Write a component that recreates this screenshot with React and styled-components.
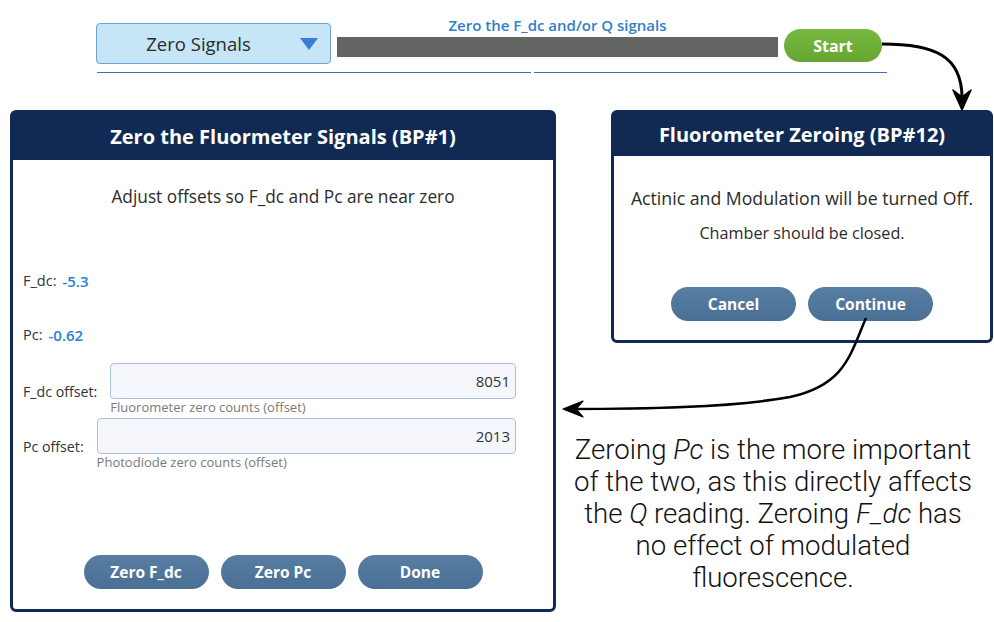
import styled, { createGlobalStyle } from "styled-components";

const GlobalStyle = createGlobalStyle`
  html, body {
    margin: 0;
    padding: 0;
    background: #ffffff;
  }
  body {
    font-family: "Open Sans", "Noto Sans", sans-serif;
    color: #333333;
  }
`;

const Page = styled.div`
  position: relative;
  width: 994px;
  height: 622px;
  overflow: hidden;
`;

const TopBar = styled.div`
  display: flex;
  align-items: flex-start;
  padding: 16px 0 0 96px;
`;

const Dropdown = styled.div`
  box-sizing: border-box;
  margin-top: 7px;
  width: 235px;
  height: 41px;
  background: #c6e6f8;
  border: 1px solid #6aa3d8;
  border-radius: 4px;
  display: flex;
  align-items: center;
  position: relative;
  font-size: 18.5px;
  color: #2b2b2b;
`;

const DropdownText = styled.span`
  flex: 1;
  text-align: center;
  padding-right: 30px;
`;

const Caret = styled.span`
  position: absolute;
  right: 12px;
  top: 14px;
  width: 0;
  height: 0;
  border-left: 9px solid transparent;
  border-right: 9px solid transparent;
  border-top: 12px solid #3a7bd5;
`;

const ProgressCol = styled.div`
  margin-left: 6px;
  width: 441px;
  display: flex;
  flex-direction: column;
`;

const ProgressLabel = styled.div`
  font-size: 15px;
  line-height: 18px;
  font-weight: 600;
  color: #2f7fc9;
  text-align: center;
`;

const ProgressBar = styled.div`
  margin-top: 3px;
  height: 20px;
  background: #636562;
`;

const StartButton = styled.button`
  margin: 13px 0 0 6px;
  width: 98px;
  height: 33px;
  border: none;
  border-radius: 17px;
  background: linear-gradient(#78b940, #64a632);
  color: #ffffff;
  font-family: "Open Sans", sans-serif;
  font-size: 16px;
  font-weight: 700;
  cursor: pointer;
`;

const RuleRow = styled.div`
  display: flex;
  margin: 8px 0 0 97px;
  gap: 3px;
`;

const Rule = styled.div`
  width: ${(p) => p.$w}px;
  height: 1px;
  background: #3b72b5;
`;

const MainRow = styled.div`
  display: flex;
  align-items: flex-start;
  margin-top: 37px;
`;

const Panel = styled.div`
  box-sizing: border-box;
  width: ${(p) => p.$w}px;
  height: ${(p) => p.$h}px;
  border: 3px solid #112a54;
  border-radius: 6px;
  display: flex;
  flex-direction: column;
  background: #ffffff;
`;

const LeftPanel = styled(Panel)`
  margin-left: 10px;
`;

const PanelHeader = styled.div`
  height: ${(p) => p.$h}px;
  flex-shrink: 0;
  background: #112a54;
  color: #ffffff;
  font-size: 20px;
  font-weight: 700;
  display: flex;
  align-items: center;
  justify-content: center;
`;

const PanelBody = styled.div`
  flex: 1;
  display: flex;
  flex-direction: column;
  padding: 0 10px 20px 10px;
`;

const Subtitle = styled.div`
  margin-top: ${(p) => p.$mt}px;
  font-size: ${(p) => p.$size || 17.3}px;
  line-height: 22px;
  text-align: center;
  color: #2b2b2b;
`;

const ReadRow = styled.div`
  margin-top: ${(p) => p.$mt}px;
  font-size: 14.5px;
  line-height: 20px;
  display: flex;
  gap: 6px;
`;

const Value = styled.span`
  color: #2a7fd0;
  font-weight: 600;
  font-size: 15px;
`;

const FieldRow = styled.div`
  margin-top: ${(p) => p.$mt}px;
  padding-right: 27px;
  display: flex;
  align-items: flex-start;
`;

const FieldLabel = styled.label`
  font-size: 14.2px;
  line-height: 20px;
  padding-top: 19px;
  margin-right: 13px;
  white-space: nowrap;
`;

const FieldCol = styled.div`
  flex: 1;
  display: flex;
  flex-direction: column;
`;

const Input = styled.input`
  box-sizing: border-box;
  height: 36px;
  width: 100%;
  background: #f5f7fd;
  border: 1px solid #a9bfe0;
  border-radius: 4px;
  text-align: right;
  padding: 0 5px;
  font-family: "Open Sans", sans-serif;
  font-size: 15px;
  color: #333333;
`;

const Hint = styled.div`
  font-size: 13px;
  line-height: 16px;
  color: #7a7a7a;
`;

const ButtonRow = styled.div`
  margin-top: auto;
  display: flex;
  justify-content: center;
  gap: 12px;
`;

const ActionButton = styled.button`
  width: 125px;
  height: 34px;
  border: none;
  border-radius: 17px;
  background: linear-gradient(#587ea4, #4a6f95);
  color: #ffffff;
  font-family: "Open Sans", sans-serif;
  font-size: 15.5px;
  font-weight: 700;
  cursor: pointer;
`;

const RightCol = styled.div`
  margin-left: 4px;
  width: 434px;
  display: flex;
  flex-direction: column;
`;

const RightPanel = styled(Panel)`
  margin-left: 51px;
`;

const DialogBody = styled.div`
  flex: 1;
  display: flex;
  flex-direction: column;
  padding-bottom: 19px;
`;

const Note = styled.p`
  margin: 91px 0 0 11px;
  width: 404px;
  font-family: Roboto, "Liberation Sans", sans-serif;
  font-weight: 300;
  font-size: 27.6px;
  line-height: 32px;
  text-align: center;
  color: #111111;
  em {
    font-style: italic;
  }
`;

const Overlay = styled.svg`
  position: absolute;
  left: 0;
  top: 0;
  pointer-events: none;
`;

export default function App() {
  return (
    <>
      <GlobalStyle />
      <Page>
        <TopBar>
          <Dropdown>
            <DropdownText>Zero Signals</DropdownText>
            <Caret />
          </Dropdown>
          <ProgressCol>
            <ProgressLabel>Zero the F_dc and/or Q signals</ProgressLabel>
            <ProgressBar />
          </ProgressCol>
          <StartButton>Start</StartButton>
        </TopBar>
        <RuleRow>
          <Rule $w={434} />
          <Rule $w={353} />
        </RuleRow>

        <MainRow>
          <LeftPanel $w={546} $h={502}>
            <PanelHeader $h={47}>Zero the Fluormeter Signals (BP#1)</PanelHeader>
            <PanelBody>
              <Subtitle $mt={26}>Adjust offsets so F_dc and Pc are near zero</Subtitle>
              <ReadRow $mt={63}>
                F_dc: <Value>-5.3</Value>
              </ReadRow>
              <ReadRow $mt={34}>
                Pc: <Value>-0.62</Value>
              </ReadRow>
              <FieldRow $mt={18}>
                <FieldLabel>F_dc offset:</FieldLabel>
                <FieldCol>
                  <Input defaultValue="8051" />
                  <Hint>Fluorometer zero counts (offset)</Hint>
                </FieldCol>
              </FieldRow>
              <FieldRow $mt={3}>
                <FieldLabel>Pc offset:</FieldLabel>
                <FieldCol>
                  <Input defaultValue="2013" />
                  <Hint>Photodiode zero counts (offset)</Hint>
                </FieldCol>
              </FieldRow>
              <ButtonRow>
                <ActionButton>Zero F_dc</ActionButton>
                <ActionButton>Zero Pc</ActionButton>
                <ActionButton>Done</ActionButton>
              </ButtonRow>
            </PanelBody>
          </LeftPanel>

          <RightCol>
            <RightPanel $w={382} $h={233}>
              <PanelHeader $h={43}>Fluorometer Zeroing (BP#12)</PanelHeader>
              <DialogBody>
                <Subtitle $mt={31} $size={17.7}>Actinic and Modulation will be turned Off.</Subtitle>
                <Subtitle $mt={13} $size={16.2}>Chamber should be closed.</Subtitle>
                <ButtonRow>
                  <ActionButton>Cancel</ActionButton>
                  <ActionButton>Continue</ActionButton>
                </ButtonRow>
              </DialogBody>
            </RightPanel>
            <Note>
              Zeroing <em>Pc</em> is the more important of the two, as this
              directly affects the <em>Q</em> reading. Zeroing <em>F_dc</em> has
              no effect of modulated fluorescence.
            </Note>
          </RightCol>
        </MainRow>

        <Overlay width="994" height="622" viewBox="0 0 994 622">
          <path
            d="M882 44 C 935 44, 962 56, 962 98"
            fill="none"
            stroke="#000"
            strokeWidth="3"
          />
          <path d="M962 110 L953 90 L962 97 L971 90 Z" fill="#000" stroke="#000" strokeWidth="1.5" strokeLinejoin="round" />
          <path
            d="M866 318 C 850 355, 845 385, 790 397 C 730 408, 640 409, 572 409"
            fill="none"
            stroke="#000"
            strokeWidth="2.5"
          />
          <path d="M563 409 L583 401 L576 409 L583 417 Z" fill="#000" stroke="#000" strokeWidth="1.2" strokeLinejoin="round" />
        </Overlay>
      </Page>
    </>
  );
}
